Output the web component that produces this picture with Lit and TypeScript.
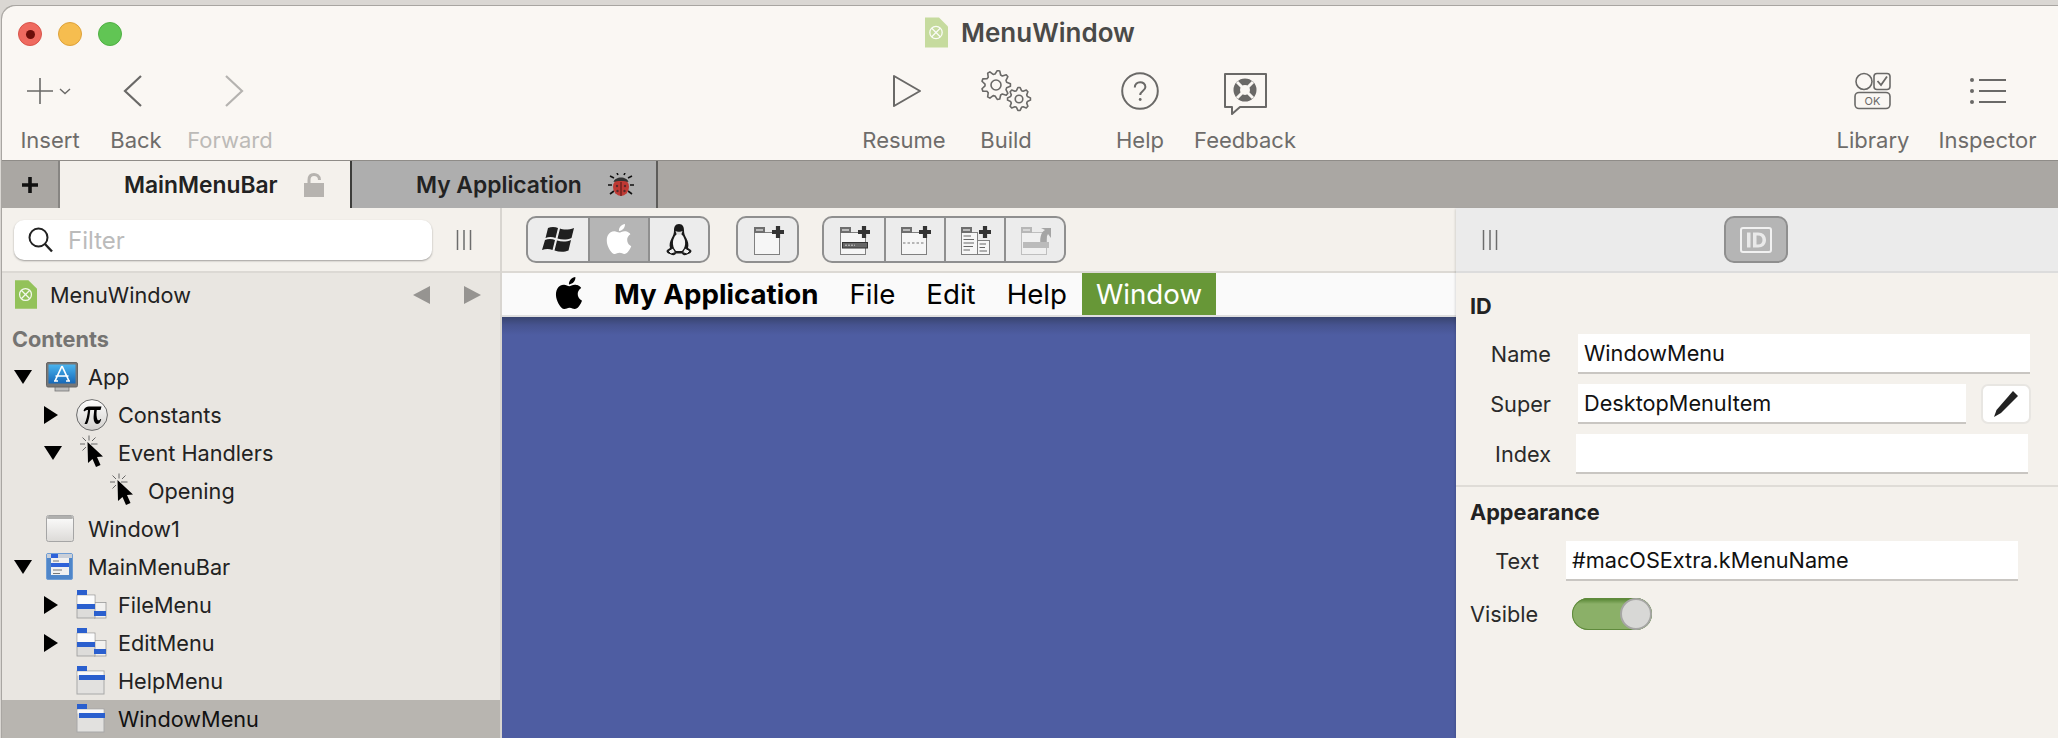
import { LitElement, html, svg, css } from "lit";
import { customElement } from "lit/decorators.js";

const gearPath = (cx: number, cy: number, r: number, teeth: number) => {
  const pts: string[] = [];
  const n = teeth * 4;
  for (let i = 0; i < n; i++) {
    const a = (i / n) * Math.PI * 2 - Math.PI / teeth / 4;
    const rr = i % 4 < 2 ? r : r * 0.76;
    pts.push(`${(cx + rr * Math.cos(a)).toFixed(2)},${(cy + rr * Math.sin(a)).toFixed(2)}`);
  }
  return `M${pts.join("L")}Z`;
};
const APPLE =
  "M12.152 6.896c-.948 0-2.415-1.078-3.96-1.04-2.04.027-3.91 1.183-4.961 3.014-2.117 3.675-.546 9.103 1.519 12.09 1.013 1.454 2.208 3.09 3.792 3.039 1.52-.065 2.09-.987 3.935-.987 1.831 0 2.35.987 3.96.948 1.637-.026 2.676-1.48 3.676-2.948 1.156-1.688 1.636-3.325 1.662-3.415-.039-.013-3.182-1.221-3.22-4.857-.026-3.04 2.48-4.494 2.597-4.559-1.429-2.09-3.623-2.324-4.39-2.376-2-.156-3.675 1.09-4.61 1.09zM15.53 3.83c.843-1.012 1.4-2.427 1.245-3.83-1.207.052-2.662.805-3.532 1.818-.78.896-1.454 2.338-1.273 3.714 1.338.104 2.715-.688 3.559-1.701";

const docIcon = (w: number, h: number, fill: string, cls = "") => html`<svg class=${cls} width=${w} height=${h} viewBox="0 0 23 30">
  <path d="M0 0H14L23 9V30H0Z" fill=${fill}/>
  <circle cx="11" cy="15" r="6.2" fill="none" stroke="#fff" stroke-width="1.3" opacity=".9"/>
  <path d="M6.8 10.8L15.2 19.2M15.2 10.8L6.8 19.2" stroke="#fff" stroke-width="1.3" opacity=".9"/>
</svg>`;

const columnsIcon = () => html`<svg width="16" height="20" viewBox="0 0 16 20"><path d="M1.5 0V20M8 0V20M14.5 0V20" stroke="#6d6d6d" stroke-width="1.5" fill="none"/></svg>`;

const triDown = () => html`<svg width="18" height="14" viewBox="0 0 18 14"><path d="M0 0H18L9 14Z" fill="#000"/></svg>`;
const triRight = () => html`<svg width="14" height="18" viewBox="0 0 14 18"><path d="M0 0L14 9L0 18Z" fill="#000"/></svg>`;

const appIcon = () => html`<svg width="32" height="30" viewBox="0 0 32 30">
  <defs><linearGradient id="ag" x1="0" y1="0" x2="0" y2="1"><stop offset="0" stop-color="#4ab4ee"/><stop offset="1" stop-color="#1668b8"/></linearGradient></defs>
  <rect x="9" y="24" width="14" height="5" fill="#bdbdbd" stroke="#777" stroke-width=".8"/>
  <rect x=".5" y=".5" width="31" height="24.5" rx="1.5" fill="#777" stroke="#666"/>
  <rect x="2.500" y="2.500" width="27" height="19" fill="url(#ag)"/>
  <path d="M16 4L9 19M16 4L23 19M9.500 14H22.500M8 19H12M20 19H24" stroke="#fff" stroke-width="1.7" fill="none"/>
</svg>`;
const piIcon = () => html`<svg width="32" height="32" viewBox="0 0 32 32">
  <defs><linearGradient id="pg" x1="0" y1="0" x2="0" y2="1"><stop offset="0" stop-color="#fff"/><stop offset="1" stop-color="#d2d0cd"/></linearGradient></defs>
  <circle cx="16" cy="16" r="15.4" fill="url(#pg)" stroke="#6a6a6a" stroke-width="1"/>
  <path d="M7.500 11.500C8.500 8.700 10.500 7.500 13 7.500H25.500L24.500 11H20.800C20.300 15 20.500 18 21.400 20.400C22 21.800 23.500 21.700 24.400 19.900H25.200C24.600 23.500 22.800 25 21 25C19 25 17.800 22.700 17.600 19.600C17.500 17 18 14 18.200 11H14.200C13.800 15 13 22 11 25H8.500C10.500 21 11.600 15.500 12 11C10.500 11 9 11.500 8.200 12.600Z" fill="#000"/>
</svg>`;
const eventIcon = () => html`<svg class="vis-over" width="32" height="32" viewBox="0 0 32 32">
  <path d="M13 -1.500V3.500M13 9V13.500M4 7H9M15 7H21.500M6.500 .5L10 4M19.500 .5L16 4M6.500 13.500L10 10" stroke="#666" stroke-width="1" fill="none"/>
  <path d="M11.500 5L27 19.500L21 20L24.500 28L20 30L16.500 22L12 26Z" fill="#000"/>
</svg>`;
const windowIcon = () => html`<svg width="30" height="28" viewBox="0 0 30 28">
  <defs><linearGradient id="wg" x1="0" y1="0" x2="0" y2="1"><stop offset="0" stop-color="#fdfdfd"/><stop offset="1" stop-color="#dcdad7"/></linearGradient></defs>
  <rect x=".5" y=".5" width="27" height="26" rx="2" fill="url(#wg)" stroke="#a5a5a5"/>
  <rect x="1" y="1" width="26" height="3" rx="1.500" fill="#b0b0ae"/>
</svg>`;
const mainMenuIcon = () => html`<svg width="30" height="28" viewBox="0 0 30 28">
  <rect x=".5" y=".5" width="26" height="26" rx="1.500" fill="#4f86c9" stroke="#6f9dd4"/>
  <rect x="1" y="1" width="25" height="4" fill="#c9cfd8"/>
  <rect x="5" y="1" width="7" height="4" fill="#2e62d9"/>
  <rect x="5" y="5" width="18" height="17" fill="#f1f1f1"/>
  <rect x="5" y="10" width="18" height="4" fill="#2e62d9"/>
  <path d="M7 8H13M7 17H16M7 20.500H14" stroke="#777" stroke-width="1"/>
</svg>`;
const subMenuIcon = () => html`<svg width="32" height="30" viewBox="0 0 32 30">
  <rect x="18.500" y="12.500" width="11.500" height="15.500" fill="#f2f1ef" stroke="#999" stroke-width=".8"/>
  <rect x="1" y="5" width="18" height="23" fill="#dddcda" stroke="#999" stroke-width=".8"/>
  <rect x="1.500" y="5.500" width="17" height="8.500" fill="#fbfbfb"/>
  <rect x="1" y="0" width="10" height="5" fill="#2a5fce"/>
  <rect x="1" y="14" width="18" height="5" fill="#2a5fce"/>
  <rect x="18" y="21" width="12" height="5" fill="#2a5fce"/>
</svg>`;
const menuIcon = () => html`<svg width="32" height="30" viewBox="0 0 32 30">
  <rect x="1" y="5" width="27" height="23" fill="#e2e1df" stroke="#a8a8a8"/>
  <rect x="1.500" y="5.500" width="26" height="4" fill="#f8f8f8"/>
  <rect x="1" y="0" width="10" height="5" fill="#2a5fce"/>
  <rect x="3" y="9" width="26" height="5" fill="#2a5fce"/>
</svg>`;

const plus = svg`<path d="M28 4V16M22 10H34" stroke="#333" stroke-width="4.200"/>`;
const miniDoc = (content: unknown = null, faded = false, narrow = false) => html`<svg width="36" height="36" viewBox="0 0 36 36" class=${faded ? "faded" : ""}>
  <rect x="4.500" y="10.500" width=${narrow ? 16 : 25} height="22" fill="#f6f6f6" stroke="#808080"/>
  <rect x="4" y="5" width="11" height="6" fill="#6e6e6e"/>
  <rect x="6" y="7" width="7" height="2" fill="#bbb"/>
  ${content}
</svg>`;

const winLogo = () => html`<svg width="32" height="27" viewBox="0 0 32 27">
  <path d="M6 2C9 .5 13 .5 16 2L13.500 12C10.500 10.500 6.500 10.500 3.500 12Z" fill="#1f1f1f"/>
  <path d="M18 2.500C21 4 27 4 32 2L29.500 12C25 14 20 14 15.500 12.500Z" fill="#1f1f1f"/>
  <path d="M3 14C6 12.500 10 12.500 13 14L10.500 24C7.500 22.500 3.500 22.500 0 24Z" fill="#1f1f1f"/>
  <path d="M15 14.500C19.500 16 24.500 16 29 14L26.500 24.500C22 26.500 17 26 12.500 24.500Z" fill="#1f1f1f"/>
</svg>`;
const tux = () => html`<svg width="30" height="32" viewBox="0 0 30 32">
  <path d="M15 0C11 0 10 3 10 6.500C10 10 9 11.500 7.500 14.500C6 17.500 5 20.500 6 24L3 26C1.500 28 4 29.500 7 30.500C9 31.500 11 31.500 12 29.500H18C19 31.500 21 31.500 23 30.500C26 29.500 28.500 28 27 26L24 24C25 20.500 24 17.500 22.500 14.500C21 11.500 20 10 20 6.500C20 3 19 0 15 0Z" fill="#1a1a1a"/>
  <path d="M15 9.500C12 9.500 10 13 9 17C8.500 21 9.500 24.500 12 27H18C20.500 24.500 21.500 21 21 17C20 13 18 9.500 15 9.500Z" fill="#f4f4f4"/>
  <path d="M11.500 7C13 8 17 8 18.500 7L17.500 10C16 11 14 11 12.500 10Z" fill="#ddd"/>
  <path d="M4 27L9 24L11.500 28.500L7 30ZM26 27L21 24L18.500 28.500L23 30Z" fill="#eee" stroke="#1a1a1a"/>
</svg>`;

@customElement("app-root")
export class AppRoot extends LitElement {
  static styles = css`
    :host { display: block; width: 2058px; height: 738px; overflow: hidden; background: #dad7d3; font-family: Inter, "Liberation Sans", sans-serif; color: #222; }
    .window { margin: 5px 0 0 2px; height: 733px; display: flex; flex-direction: column; background: #faf7f3; border-top: 1px solid #a8a5a1; border-top-left-radius: 14px; overflow: hidden; box-shadow: -1px 0 0 #a9a6a2; }
    .titlebar { height: 46px; flex: none; display: flex; align-items: center; position: relative; padding: 10px 0 0 16px; gap: 16px; box-sizing: border-box; }
    .light { width: 24px; height: 24px; border-radius: 50%; box-sizing: border-box; display: flex; align-items: center; justify-content: center; }
    .light.r { background: #ef6a5f; border: 1px solid #d9544a; }
    .light.r::after { content: ""; width: 9px; height: 9px; border-radius: 50%; background: #6d0f0a; }
    .light.y { background: #f6bd4f; border: 1px solid #dea23a; }
    .light.g { background: #61c554; border: 1px solid #4fb043; }
    .title { position: absolute; left: 923px; top: 11px; display: flex; align-items: center; gap: 13px; font-size: 26px; font-weight: 600; color: #4a4a48; }
    .tools { height: 108px; flex: none; display: grid; grid-template-columns: 100px 72px 116px 570px 92px 112px 28px 100px 110px 526px 94px 135px; box-sizing: border-box; margin-left: -2px; }
    .tool { display: flex; flex-direction: column; align-items: center; color: #6e6c6a; font-size: 22px; }
    .tool .ic { height: 76px; padding-top: 2px; box-sizing: border-box; display: flex; align-items: center; justify-content: center; }
    .tool .lb { height: 32px; line-height: 24px; white-space: nowrap; }
    .tool.off { color: #bcbab7; }
    .tabs { height: 48px; flex: none; display: flex; background: #aaa7a3; border-top: 1px solid #8f8c88; box-sizing: border-box; }
    .tplus { width: 58px; box-sizing: border-box; display: flex; align-items: center; justify-content: center; border-right: 2px solid #878582; }
    .tab { display: flex; align-items: center; font-size: 22.8px; font-weight: 600; color: #222; border-right: 2px solid #3d3d3b; box-sizing: border-box; padding-left: 64px; gap: 26px; }
    .tab.a { width: 292px; background: #f4f1ec; }
    .tab.b { width: 306px; background: #aeaeae; border-right-color: #5d5c5a; }
    .main { flex: 1; min-height: 0; display: grid; grid-template-columns: 500px 954px 602px; }
    .side { background: #e9e6e1; border-right: 2px solid #d8d5d0; display: flex; flex-direction: column; min-height: 0; }
    .filterbar { height: 65px; flex: none; background: #f4f1ec; border-bottom: 2px solid #dcd9d4; display: flex; align-items: center; padding-left: 12px; gap: 24px; box-sizing: border-box; }
    .filter { width: 418px; height: 40px; background: #fff; border-radius: 10px; box-shadow: 0 1px 2px rgba(0,0,0,.35); display: flex; align-items: center; padding-left: 14px; gap: 15px; box-sizing: border-box; font-size: 24px; color: #bbb; }
    .filter span { padding-top: 2px; }
    .doc { height: 43px; flex: none; display: flex; align-items: center; padding-left: 13px; font-size: 21.7px; gap: 13px; color: #222; }
    .doc .nav { margin-left: auto; display: flex; gap: 34px; padding-right: 19px; }
    .contents { font-size: 21.7px; font-weight: 700; color: #757472; padding: 10px 0 0 10px; height: 27px; line-height: 27px; margin-bottom: 5px; }
    .row { height: 38px; flex: none; display: flex; align-items: center; font-size: 21.7px; color: #222; box-sizing: border-box; }
    .row.sel { background: #b8b5b0; color: #111; }
    .l0 { padding-left: 12px; } .l1 { padding-left: 42px; } .l2 { padding-left: 72px; }
    .dis { width: 32px; flex: none; display: flex; align-items: center; box-sizing: border-box; }
    .ri { width: 32px; height: 32px; flex: none; margin-right: 10px; display: flex; align-items: center; justify-content: flex-start; }
    .vis-over { overflow: visible; }
    .center { display: flex; flex-direction: column; min-height: 0; }
    .cbar { height: 65px; flex: none; background: #f4f1ec; border-bottom: 2px solid #dcd9d4; display: flex; align-items: flex-start; padding: 8px 0 0 24px; box-sizing: border-box; }
    .seg { display: flex; height: 47px; border: 2px solid #8f8f8f; border-radius: 10px; overflow: hidden; box-sizing: border-box; background: #ececec; flex: none; }
    .seg > div { flex: 1; display: flex; align-items: center; justify-content: center; border-right: 2px solid #8f8f8f; box-sizing: border-box; }
    .seg > div:first-child { flex: 0 0 62px; }
    .seg > div:last-child { border-right: 0; flex: 1; }
    .seg > .on { background: #b5b5b5; }
    .s1 { width: 184px; }
    .s2 { width: 63px; margin-left: 26px; }
    .s3 { width: 244px; margin-left: 23px; }
    .faded { opacity: .42; }
    .menubar { height: 44px; flex: none; background: #fafafa; display: flex; align-items: center; font-size: 27.7px; color: #000; border-bottom: 2px solid #dfdfdf; box-sizing: border-box; }
    .menubar .ap { margin-left: 51px; width: 61px; display: flex; }
    .menubar .nm { font-weight: 700; margin-right: 31px; }
    .menubar .it { margin-right: 31px; }
    .menubar .w { margin-left: -16px; background: #679737; color: #fff; width: 134px; height: 100%; display: flex; align-items: center; justify-content: center; }
    .canvas { flex: 1; background: linear-gradient(#38446f 0, #46538f 8px, #4e5da2 18px); }
    .right { background: #f4f1ec; display: flex; flex-direction: column; box-shadow: -2px 0 2px -1px rgba(0,0,0,.12); min-height: 0; position: relative; }
    .rbar { height: 65px; flex: none; background: #ebebeb; border-bottom: 2px solid #dcdcdc; display: flex; align-items: flex-start; box-sizing: border-box; }
    .rbar .cols { margin: 22px 0 0 26px; }
    .idbtn { margin: 8px 0 0 226px; width: 64px; height: 47px; box-sizing: border-box; background: #b5b5b5; border: 2px solid #8f8f8f; border-radius: 10px; display: flex; align-items: center; justify-content: center; }
    .sect { font-size: 21.7px; font-weight: 700; color: #222; padding-left: 14px; }
    .f { display: flex; align-items: center; font-size: 21.7px; color: #2a2a2a; }
    .f .lab { text-align: right; flex: none; }
    .f .inp { background: #fff; border-bottom: 2px solid #c9c6c2; height: 40px; box-sizing: border-box; display: flex; align-items: center; padding-left: 6px; color: #111; }
    .pen { width: 50px; height: 40px; margin-left: 15px; background: #fff; border: 2px solid #e8e6e2; border-radius: 7px; box-sizing: border-box; display: flex; align-items: center; justify-content: center; }
    .idf { display: flex; flex-direction: column; padding-top: 20px; height: 214px; box-sizing: border-box; border-bottom: 2px solid #dfdcd7; flex: none; }
    .idf .sect { height: 36px; line-height: 26px; }
    .idf .f { height: 50px; flex: none; }
    .idf .lab { width: 95px; margin-right: 27px; }
    .w452 { width: 452px; }
    .w388 { width: 388px; }
    .idx { margin-left: -2px; }
    .ap2 { padding-top: 12px; display: flex; flex-direction: column; }
    .ap2 .sect { height: 41px; line-height: 26px; }
    .ap2 .lab { width: 83px; margin-right: 27px; }
    .ap2 .f { height: 42px; }
    .vis { margin-top: 16px; display: flex; align-items: center; padding-left: 14px; font-size: 21.7px; color: #2a2a2a; }
    .vis span { width: 102px; }
    .toggle { width: 80px; height: 32px; border-radius: 16px; background: linear-gradient(#4f7f2c 0, #8bb068 6px, #8bb068 100%); box-shadow: inset 0 0 0 1px #5f8a3c; display: flex; justify-content: flex-end; }
    .knob { width: 32px; height: 32px; border-radius: 50%; background: #d8d8d6; border: 2px solid #a6a6a4; box-sizing: border-box; }
  `;

  private row(level: number, dis: string, icon: unknown, label: string, sel = false) {
    return html`<div class="row l${level} ${sel ? "sel" : ""}">
      <span class="dis">${dis === "d" ? triDown() : dis === "r" ? triRight() : ""}</span>
      <span class="ri">${icon}</span><span>${label}</span>
    </div>`;
  }

  private tool(label: string, icon: unknown, off = false) {
    return html`<div class="tool ${off ? "off" : ""}"><div class="ic">${icon}</div><div class="lb">${label}</div></div>`;
  }

  render() {
    const st = "#6a6967";
    return html`<div class="window">
      <div class="titlebar">
        <span class="light r"></span><span class="light y"></span><span class="light g"></span>
        <div class="title">${docIcon(23, 31, "#c6db9e")}<span>MenuWindow</span></div>
      </div>
      <div class="tools">
        ${this.tool("Insert", html`<svg width="46" height="30" viewBox="0 0 46 30"><path d="M13 2V28M0 15H26" stroke=${st} stroke-width="1.6" fill="none"/><path d="M33 13L38 17.500L43 13" stroke=${st} stroke-width="1.4" fill="none"/></svg>`)}
        ${this.tool("Back", html`<svg width="26" height="34" viewBox="0 0 26 34"><path d="M18 2L2 17L18 32" stroke=${st} stroke-width="2.2" fill="none"/></svg>`)}
        ${this.tool("Forward", html`<svg width="28" height="34" viewBox="0 0 28 34"><path d="M10 2L26 17L10 32" stroke="#b5b3b0" stroke-width="2.2" fill="none"/></svg>`, true)}
        <div></div>
        ${this.tool("Resume", html`<svg width="36" height="34" viewBox="0 0 36 34"><path d="M8 2L34 17L8 32Z" stroke=${st} stroke-width="2" stroke-linejoin="round" fill="none"/></svg>`)}
        ${this.tool("Build", html`<svg width="52" height="42" viewBox="0 0 52 42">
          <path d=${gearPath(16, 15, 14.5, 9)} stroke=${st} stroke-width="1.6" fill="none" stroke-linejoin="round"/><circle cx="16" cy="15" r="5" stroke=${st} stroke-width="1.6" fill="none"/>
          <path d=${gearPath(39, 29, 11.5, 8)} stroke=${st} stroke-width="1.6" fill="none" stroke-linejoin="round"/><circle cx="39" cy="29" r="3.8" stroke=${st} stroke-width="1.6" fill="none"/></svg>`)}
        <div></div>
        ${this.tool("Help", html`<svg width="38" height="38" viewBox="0 0 38 38"><circle cx="19" cy="19" r="17.8" stroke=${st} stroke-width="2" fill="none"/><path d="M13.800 15.500C13.800 8.500 24.400 8.500 24.400 15C24.400 19 19.200 19 19.200 23" stroke=${st} stroke-width="2" fill="none"/><circle cx="19.200" cy="27.500" r="1.4" fill=${st}/></svg>`)}
        ${this.tool("Feedback", html`<svg width="44" height="48" viewBox="0 -6 44 48"><path d="M2 1H43V34H17L9 41V34H2Z" stroke=${st} stroke-width="2" stroke-linejoin="round" fill="none"/>
          <circle cx="22" cy="17" r="11.5" fill=${st}/><path d="M14 9L30 25M30 9L14 25" stroke="#faf7f3" stroke-width="3"/><circle cx="22" cy="17" r="5" fill="#faf7f3"/></svg>`)}
        <div></div>
        ${this.tool("Library", html`<svg width="38" height="38" viewBox="0 0 38 38"><circle cx="10" cy="9.500" r="8" stroke=${st} stroke-width="1.6" fill="none"/><rect x="20" y="1.500" width="16" height="16" rx="3" stroke=${st} stroke-width="1.6" fill="none"/><path d="M23.500 9L27 13L33 4.500" stroke=${st} stroke-width="1.8" fill="none"/><rect x="1" y="20.500" width="35" height="16" rx="4" stroke=${st} stroke-width="1.6" fill="none"/><text x="18.500" y="33" font-size="11" text-anchor="middle" fill=${st} font-family="Inter">OK</text></svg>`)}
        ${this.tool("Inspector", html`<svg width="38" height="30" viewBox="0 0 38 30"><circle cx="3" cy="4" r="2" fill=${st}/><circle cx="3" cy="15" r="2" fill=${st}/><circle cx="3" cy="26" r="2" fill=${st}/><path d="M10 4H37M10 15H37M10 26H37" stroke=${st} stroke-width="2.2"/></svg>`)}
      </div>
      <div class="tabs">
        <div class="tplus"><svg width="16" height="16" viewBox="0 0 16 16"><path d="M8 0V16M0 8H16" stroke="#111" stroke-width="3.6"/></svg></div>
        <div class="tab a"><span>MainMenuBar</span><svg width="20" height="24" viewBox="0 0 20 24"><path d="M5 11V7C5 3 7.500 1.500 10 1.500S15.500 3 15.500 7" fill="none" stroke="#b6b3af" stroke-width="3"/><rect x="0" y="10" width="20" height="14" fill="#b6b3af"/></svg></div>
        <div class="tab b"><span>My Application</span><svg width="26" height="24" viewBox="0 0 26 24"><path d="M6 5L2 3M20 5L24 3M4 12H0M22 12H26M6 18L2 21M20 18L24 21M10 2L9 0M16 2L17 0" stroke="#111" stroke-width="1.6"/><ellipse cx="13" cy="14" rx="8" ry="9" fill="#bf3a34"/><path d="M5.500 9C7 3 19 3 20.500 9C17 7.500 9 7.500 5.500 9Z" fill="#333"/><path d="M13 9V23" stroke="#4a1512" stroke-width="1"/><circle cx="9" cy="13" r="1.2" fill="#5a2a2a"/><circle cx="17" cy="13" r="1.2" fill="#5a2a2a"/><circle cx="9.500" cy="18" r="1.2" fill="#5a2a2a"/><circle cx="16.500" cy="18" r="1.2" fill="#5a2a2a"/></svg></div>
      </div>
      <div class="main">
        <div class="side">
          <div class="filterbar">
            <div class="filter"><svg width="25" height="26" viewBox="0 0 25 26"><circle cx="10.500" cy="10.500" r="9" stroke="#222" stroke-width="2" fill="none"/><path d="M17 17L24 24.500" stroke="#222" stroke-width="2.4"/></svg><span>Filter</span></div>
            ${columnsIcon()}
          </div>
          <div class="doc">${docIcon(22, 29, "#93c25a")}<span>MenuWindow</span>
            <div class="nav"><svg width="17" height="18" viewBox="0 0 17 18"><path d="M17 0V18L0 9Z" fill="#969491"/></svg><svg width="17" height="18" viewBox="0 0 17 18"><path d="M0 0V18L17 9Z" fill="#969491"/></svg></div>
          </div>
          <div class="contents">Contents</div>
          ${this.row(0, "d", appIcon(), "App")}
          ${this.row(1, "r", piIcon(), "Constants")}
          ${this.row(1, "d", eventIcon(), "Event Handlers")}
          ${this.row(2, "", eventIcon(), "Opening")}
          ${this.row(0, "", windowIcon(), "Window1")}
          ${this.row(0, "d", mainMenuIcon(), "MainMenuBar")}
          ${this.row(1, "r", subMenuIcon(), "FileMenu")}
          ${this.row(1, "r", subMenuIcon(), "EditMenu")}
          ${this.row(1, "", menuIcon(), "HelpMenu")}
          ${this.row(1, "", menuIcon(), "WindowMenu", true)}
        </div>
        <div class="center">
          <div class="cbar">
            <div class="seg s1">
              <div>${winLogo()}</div>
              <div class="on"><svg width="30" height="32" viewBox="0 0 24 25.600"><path d=${APPLE} fill="#fff"/></svg></div>
              <div>${tux()}</div>
            </div>
            <div class="seg s2"><div>${miniDoc(plus)}</div></div>
            <div class="seg s3">
              <div>${miniDoc(svg`${plus}<rect x="6.500" y="20.500" width="25" height="5.500" fill="#666" stroke="#333"/><path d="M9 23.200H19" stroke="#ccc" stroke-dasharray="2 1"/>`)}</div>
              <div>${miniDoc(svg`${plus}<path d="M6 21H28" stroke="#777" stroke-width="1" stroke-dasharray="2.500 2"/>`)}</div>
              <div>${miniDoc(svg`<rect x="20.500" y="18.500" width="12" height="14" fill="#f6f6f6" stroke="#808080"/><path d="M6.500 14H14M6.500 17.500H17M6.500 21H17M6.500 24.500H16M6.500 28H13M22.500 22H29M22.500 25.500H28M22.500 29H30" stroke="#666" stroke-width="1.2"/>${plus}`, false, true)}</div>
              <div>${miniDoc(svg`<path d="M24 24C22 17 24 10 28 8L24 6H34V16L31 12C29 15 29 20 30 24Z" fill="#444"/><rect x="6" y="20" width="26" height="6" fill="#777"/>`, true)}</div>
            </div>
          </div>
          <div class="menubar">
            <span class="ap"><svg width="32" height="34" viewBox="0 0 24 25.500"><path d=${APPLE} fill="#000"/></svg></span>
            <span class="nm">My Application</span><span class="it">File</span><span class="it">Edit</span><span class="it">Help</span><span class="w">Window</span>
          </div>
          <div class="canvas"></div>
        </div>
        <div class="right">
          <div class="rbar"><span class="cols">${columnsIcon()}</span>
            <div class="idbtn"><svg width="32" height="26" viewBox="0 0 32 26"><rect x="1" y="1" width="30" height="24" rx="2" fill="none" stroke="#f1f1f1" stroke-width="2"/><path d="M7 5.500H10.500V20.500H7ZM13 5.500H18C23 5.500 26 8.500 26 13S23 20.500 18 20.500H13ZM16.500 8.500V17.500H18C21 17.500 22.500 15.500 22.500 13S21 8.500 18 8.500Z" fill="#eaeaea" fill-rule="evenodd"/></svg></div>
          </div>
          <div class="idf">
            <div class="sect">ID</div>
            <div class="f"><span class="lab">Name</span><span class="inp w452">WindowMenu</span></div>
            <div class="f"><span class="lab">Super</span><span class="inp w388">DesktopMenuItem</span>
              <span class="pen"><svg width="26" height="28" viewBox="0 0 26 28"><path d="M20 1L25 6L8 23L1 27L3.500 20Z" fill="#222"/></svg></span></div>
            <div class="f"><span class="lab">Index</span><span class="inp w452 idx"></span></div>
          </div>
          <div class="ap2">
            <div class="sect">Appearance</div>
            <div class="f"><span class="lab">Text</span><span class="inp w452">#macOSExtra.kMenuName</span></div>
            <div class="vis"><span>Visible</span><div class="toggle"><div class="knob"></div></div></div>
          </div>
        </div>
      </div>
    </div>`;
  }
}
